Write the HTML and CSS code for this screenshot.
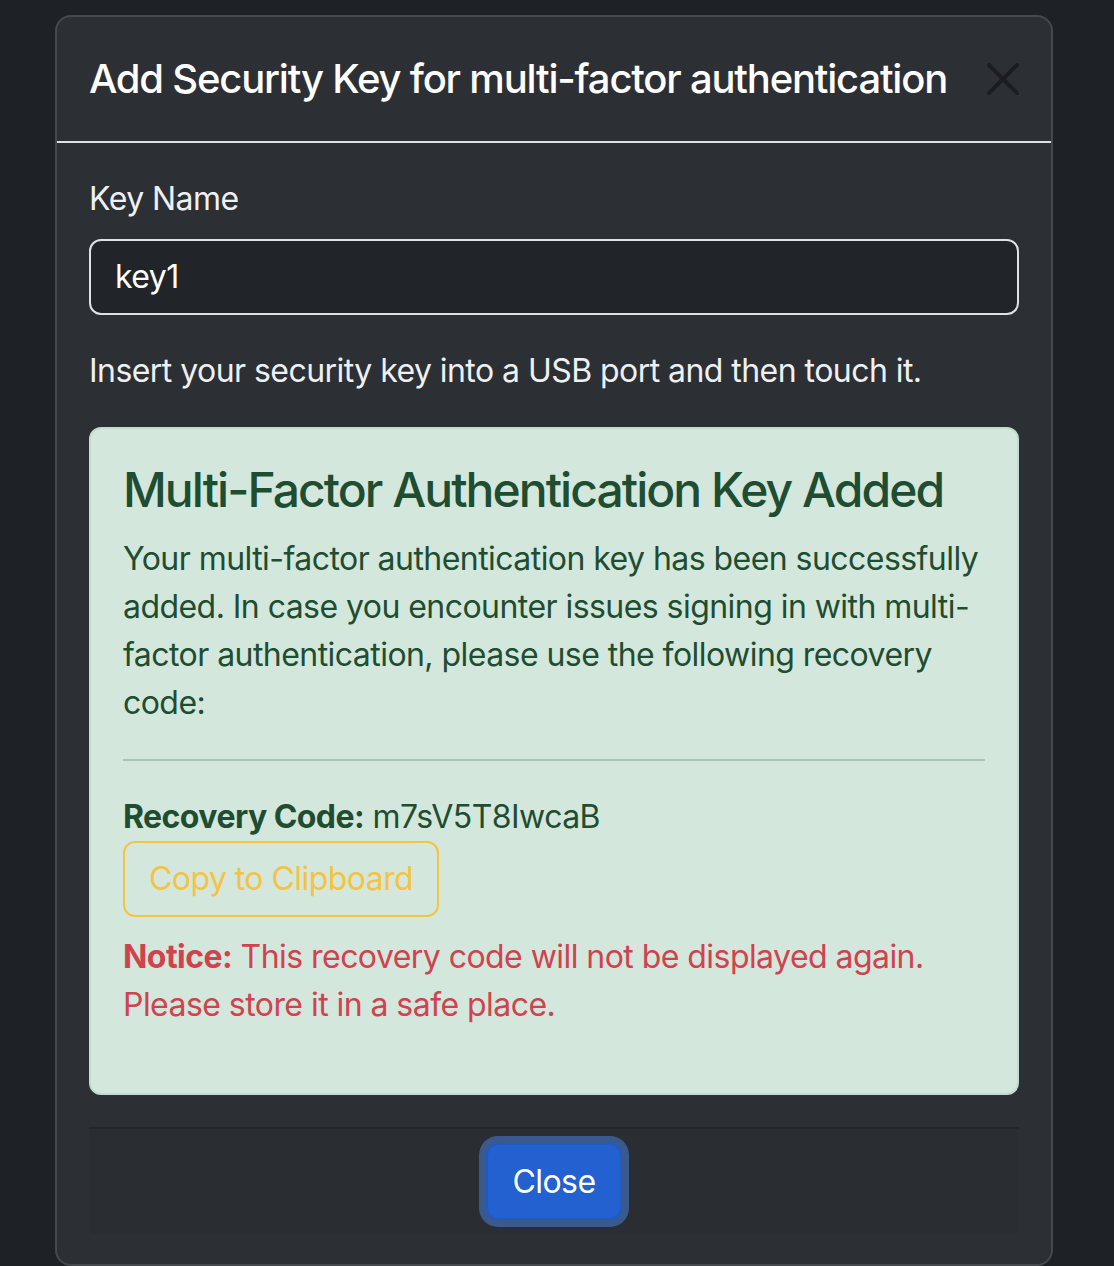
FILE: index.html
```html
<!DOCTYPE html>
<html lang="en">
<head>
<meta charset="utf-8">
<title>Add Security Key</title>
<link rel="stylesheet" href="styles.css">
</head>
<body>
<div class="backdrop">
  <div class="modal">
    <div class="modal-header">
      <h5 class="modal-title">Add Security Key for multi-factor authentication</h5>
      <button class="btn-close" aria-label="Close">
        <svg viewBox="0 0 32 32" width="32" height="32"><path d="M2 2L30 30M30 2L2 30" stroke="#1b1d20" stroke-width="4" stroke-linecap="round" fill="none"/></svg>
      </button>
    </div>
    <div class="modal-body">
      <label class="form-label">Key Name</label>
      <div class="form-control">key1</div>
      <p class="instructions">Insert your security key into a USB port and then touch it.</p>
      <div class="alert">
        <h4 class="alert-heading">Multi-Factor Authentication Key Added</h4>
        <p class="alert-text">Your multi-factor authentication key has been successfully added. In case you encounter issues signing in with multi-factor authentication, please use the following recovery code:</p>
        <hr class="divider">
        <div class="code-line"><strong>Recovery Code:</strong> m7sV5T8IwcaB</div>
        <button class="btn-copy">Copy to Clipboard</button>
        <p class="notice"><strong>Notice:</strong> This recovery code will not be displayed again. Please store it in a safe place.</p>
      </div>
      <div class="modal-footer">
        <button class="btn-primary">Close</button>
      </div>
    </div>
  </div>
</div>
</body>
</html>
```
FILE: styles.css
```css
* { box-sizing: border-box; }
html, body {
  margin: 0;
  padding: 0;
  background: #1e2125;
  height: 100%;
  overflow: hidden;
}
body {
  font-family: Inter, "Noto Sans", "Liberation Sans", sans-serif;
  color: #eef0f2;
  font-size: 32px;
  line-height: 48px;
  letter-spacing: -0.55px;
}
.backdrop {
  padding: 15px 0 0 55px;
}
.modal {
  width: 998px;
  background: #2c2f34;
  border: 2px solid #46494e;
  border-radius: 16px;
}
.modal-header {
  display: flex;
  align-items: center;
  justify-content: space-between;
  padding: 32px;
  border-bottom: 2px solid #dee2e6;
}
.modal-title {
  margin: 0;
  font-size: 40px;
  line-height: 60px;
  font-weight: 500;
  color: #ffffff;
  letter-spacing: -1.2px;
  white-space: nowrap;
}
.btn-close {
  width: 32px;
  height: 32px;
  padding: 0;
  border: 0;
  background: transparent;
  display: flex;
}
.modal-body {
  padding: 32px 32px 30px 32px;
}
.form-label {
  display: block;
  margin-bottom: 16px;
  font-weight: 400;
}
.form-control {
  height: 76px;
  padding: 12px 24px;
  border: 2px solid #dee2e6;
  border-radius: 12px;
  background: #212529;
  color: #ffffff;
  margin-bottom: 32px;
}
.instructions {
  margin: 0 0 32px 0;
}
.alert {
  background: #d4e7dd;
  border: 2px solid #c0dccd;
  border-radius: 12px;
  padding: 32px;
  color: #1e4d31;
}
.alert-heading {
  margin: 0 0 16px 0;
  font-size: 48px;
  line-height: 58px;
  font-weight: 500;
  letter-spacing: -1.95px;
  white-space: nowrap;
}
.alert-text {
  margin: 0;
}
.divider {
  margin: 32px 0;
  border: 0;
  border-top: 2px solid #a9c4b6;
  height: 0;
}
.code-line strong { font-weight: 700; }
.btn-copy {
  font-family: inherit;
  font-size: 32px;
  line-height: 48px;
  letter-spacing: -0.55px;
  padding: 12px 24px;
  height: 76px;
  border: 2px solid #f5c342;
  border-radius: 12px;
  background: transparent;
  color: #f5c342;
}
.notice {
  margin: 16px 0 32px 0;
  color: #d0434e;
}
.notice strong { font-weight: 700; }
.modal-footer {
  margin-top: 32px;
  border-top: 2px solid #23262a;
  background: #2a2d32;
  border-radius: 0 0 8px 8px;
  padding: 14px 0;
  display: flex;
  justify-content: center;
}
.btn-primary {
  font-family: inherit;
  font-size: 32px;
  line-height: 48px;
  letter-spacing: -0.55px;
  padding: 12px 24px;
  height: 77px;
  background: #2360d0;
  color: #ffffff;
  border: 2px solid #2259c4;
  border-radius: 12px;
  box-shadow: 0 0 0 7px #3a5a8e;
}
```
